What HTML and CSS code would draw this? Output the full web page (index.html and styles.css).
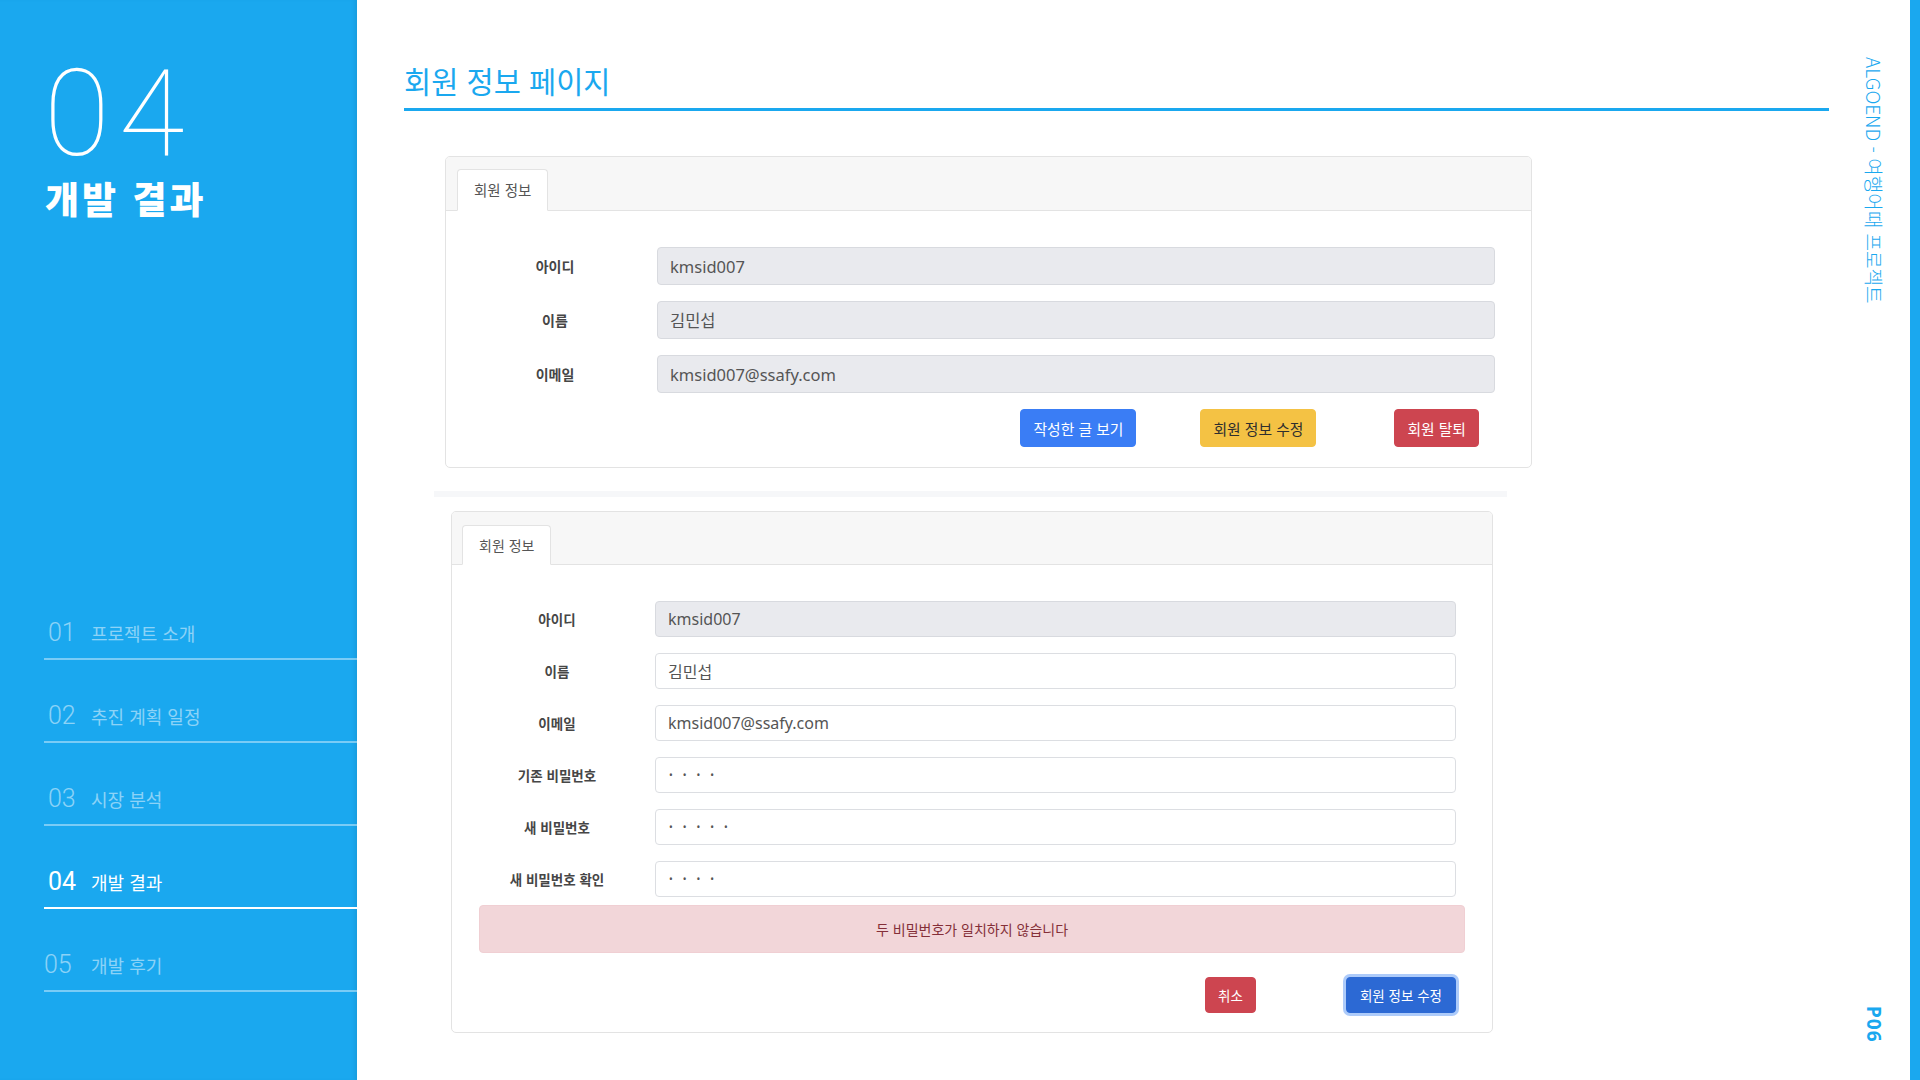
FILE: index.html
```html
<!DOCTYPE html>
<html lang="ko">
<head>
<meta charset="utf-8">
<title>개발 결과 - 회원 정보 페이지</title>
<link rel="stylesheet" href="styles.css">
</head>
<body>
<div class="slide">
  <aside class="sidebar">
    <div class="chapter-num">04</div>
    <div class="chapter-title">개발 결과</div>
    <nav class="toc">
      <div class="toc-item"><span class="toc-num">01</span><span class="toc-text">프로젝트 소개</span></div>
      <div class="toc-item"><span class="toc-num">02</span><span class="toc-text">추진 계획 일정</span></div>
      <div class="toc-item"><span class="toc-num">03</span><span class="toc-text">시장 분석</span></div>
      <div class="toc-item active"><span class="toc-num">04</span><span class="toc-text">개발 결과</span></div>
      <div class="toc-item"><span class="toc-num toc-num-shift">05</span><span class="toc-text">개발 후기</span></div>
    </nav>
  </aside>

  <main class="content">
    <h1 class="page-title">회원 정보 페이지</h1>

    <section class="card card-view">
      <div class="card-header"><div class="tab">회원 정보</div></div>
      <div class="card-body">
        <div class="form-grid">
          <label class="label">아이디</label><input class="input input-readonly" type="text" value="kmsid007" readonly>
          <label class="label">이름</label><input class="input input-readonly" type="text" value="김민섭" readonly>
          <label class="label">이메일</label><input class="input input-readonly" type="text" value="kmsid007@ssafy.com" readonly>
        </div>
        <div class="actions">
          <button class="btn btn-primary">작성한 글 보기</button>
          <button class="btn btn-warning">회원 정보 수정</button>
          <button class="btn btn-danger btn-far">회원 탈퇴</button>
        </div>
      </div>
    </section>

    <div class="divider"></div>

    <section class="card card-edit">
      <div class="card-header"><div class="tab">회원 정보</div></div>
      <div class="card-body">
        <div class="form-grid">
          <label class="label">아이디</label><input class="input input-readonly" type="text" value="kmsid007" readonly>
          <label class="label">이름</label><input class="input" type="text" value="김민섭">
          <label class="label">이메일</label><input class="input" type="text" value="kmsid007@ssafy.com">
          <label class="label">기존 비밀번호</label><input class="input pw" type="password" value="1234">
          <label class="label">새 비밀번호</label><input class="input pw" type="password" value="12345">
          <label class="label">새 비밀번호 확인</label><input class="input pw" type="password" value="1234">
        </div>
        <div class="alert">두 비밀번호가 일치하지 않습니다</div>
        <div class="actions">
          <button class="btn btn-danger">취소</button>
          <button class="btn btn-primary-dark">회원 정보 수정</button>
        </div>
      </div>
    </section>
  </main>

  <aside class="rail">
    <div class="rail-title">ALGOEND - 여행어때 프로젝트</div>
    <div class="rail-page">P06</div>
  </aside>
  <div class="edge"></div>
</div>
</body>
</html>
```

FILE: styles.css
```css
* { box-sizing: border-box; }
html, body { margin: 0; padding: 0; }
body {
  width: 1920px;
  height: 1080px;
  overflow: hidden;
  background: #ffffff;
  font-family: "Noto Sans", "Noto Sans CJK KR", sans-serif;
}
.slide { display: flex; width: 1920px; height: 1080px; }

/* ---------- sidebar ---------- */
.sidebar {
  width: 357px;
  flex: none;
  background: #1aa8ef;
  padding: 54px 0 0 44px;
  display: flex;
  flex-direction: column;
  color: #ffffff;
  box-shadow: inset -4px 0 4px -2px rgba(0, 0, 0, 0.08);
}
.chapter-num {
  font-family: Roboto, Lato, sans-serif;
  font-weight: 100;
  font-size: 120px;
  line-height: 120px;
  height: 120px;
  letter-spacing: 9px;
}
.chapter-title {
  margin-top: 6px;
  padding-left: 1px;
  font-family: "Noto Sans CJK KR", sans-serif;
  font-weight: 900;
  font-size: 37px;
  line-height: 36px;
  letter-spacing: 3px;
}
.toc { margin-top: 361px; }
.toc-item {
  display: flex;
  align-items: center;
  height: 83px;
  padding-top: 41px;
  padding-bottom: 10px;
  border-bottom: 2px solid rgba(255, 255, 255, 0.42);
  color: rgba(255, 255, 255, 0.5);
}
.toc-num {
  width: 47px;
  padding-left: 4px;
  font-family: Roboto, sans-serif;
  font-weight: 300;
  font-size: 25px;
  line-height: 30px;
}
.toc-num-shift { padding-left: 0; }
.toc-text {
  font-family: "Noto Sans CJK KR", sans-serif;
  font-weight: 400;
  font-size: 18px;
  line-height: 30px;
}
.toc-item.active { color: #ffffff; border-bottom-color: #ffffff; }
.toc-item.active .toc-num { font-weight: 400; }

/* ---------- content ---------- */
.content {
  flex: 1;
  padding: 62px 0 0 47px;
}
.page-title {
  margin: 0;
  font-family: "Noto Sans CJK KR", sans-serif;
  font-weight: 400;
  font-size: 29.5px;
  line-height: 36px;
  color: #1aa8ef;
  padding-bottom: 10px;
  border-bottom: 3px solid #1aa8ef;
}

.card {
  border: 1px solid #e3e3e3;
  border-radius: 5px;
  background: #ffffff;
  overflow: hidden;
}
.card-header {
  display: flex;
  background: #f7f7f7;
  border-bottom: 1px solid #e3e3e3;
}
.tab {
  background: #ffffff;
  border: 1px solid #e3e3e3;
  border-bottom-color: #ffffff;
  border-radius: 4px 4px 0 0;
  margin-bottom: -1px;
  padding: 0 16px;
  color: #555555;
  font-family: "Noto Sans CJK KR", sans-serif;
}
.label {
  text-align: center;
  font-family: "Noto Sans CJK KR", sans-serif;
  font-weight: 700;
  color: #464646;
  align-self: center;
}
.input {
  display: block;
  width: 100%;
  height: 100%;
  margin: 0;
  padding: 0 12px;
  border: 1px solid #dcdee2;
  border-radius: 4px;
  background: #ffffff;
  color: #555555;
  font-family: "Noto Sans", "Noto Sans CJK KR", sans-serif;
  outline: none;
}
.input-readonly { background: #e9eaee; border-color: #d8dadf; }
.input.pw { font-size: 10px; letter-spacing: 10px; padding-left: 13px; color: #555555; }

.form-grid { display: grid; grid-template-columns: 162px 1fr; column-gap: 21px; row-gap: 16px; }
.actions { display: flex; justify-content: flex-end; align-items: center; }

.btn {
  border: 1px solid transparent;
  border-radius: 4px;
  padding: 0 12px;
  font-family: "Noto Sans CJK KR", sans-serif;
  font-weight: 400;
  cursor: pointer;
  white-space: nowrap;
}
.btn-primary { background: #3a7df5; border-color: #3a7df5; color: #ffffff; }
.btn-warning { background: #f4c244; border-color: #f4c244; color: #2e2e2e; }
.btn-danger { background: #cd4550; border-color: #cd4550; color: #ffffff; }
.btn-primary-dark {
  background: #2c69d4;
  border-color: #2c69d4;
  color: #ffffff;
  padding: 0 13px;
  box-shadow: 0 0 0 3px rgba(74, 140, 245, 0.45);
}

/* view card */
.card-view { margin: 45px 0 0 41px; width: 1087px; }
.card-view .card-header { height: 54px; padding: 12px 0 0 11px; }
.card-view .tab { height: 42px; line-height: 40px; font-size: 14.5px; }
.card-view .card-body { padding: 36px 36px 20px 28px; }
.card-view .form-grid { grid-auto-rows: 38px; }
.card-view .label { font-size: 14px; }
.card-view .input { font-size: 16.5px; }
.card-view .actions { margin-top: 16px; padding-right: 16px; gap: 64px; }
.card-view .btn { height: 38px; font-size: 14.8px; }
.card-view .btn-far { margin-left: 14px; }

.divider {
  margin: 23px 0 0 30px;
  width: 1073px;
  height: 6px;
  background: #f6f7f9;
}

/* edit card */
.card-edit { margin: 14px 0 0 47px; width: 1042px; }
.card-edit .card-header { height: 53px; padding: 13px 0 0 10px; }
.card-edit .tab { height: 40px; line-height: 38px; font-size: 14px; }
.card-edit .card-body { padding: 36px 36px 19px 28px; }
.card-edit .form-grid { grid-template-columns: 154px 1fr; grid-auto-rows: 36px; }
.card-edit .label { font-size: 13.5px; }
.card-edit .input { font-size: 16px; }
.card-edit .input.pw { font-size: 10px; }
.alert {
  margin: 8px -9px 0 -1px;
  height: 48px;
  line-height: 46px;
  border: 1px solid #f0cfd3;
  border-radius: 4px;
  background: #f2d6d9;
  color: #842f38;
  text-align: center;
  font-family: "Noto Sans CJK KR", sans-serif;
  font-size: 14px;
}
.card-edit .actions { margin-top: 24px; gap: 90px; padding-right: 0; }
.card-edit .btn { height: 36px; font-size: 13.5px; }

/* ---------- right rail ---------- */
.rail {
  width: 81px;
  flex: none;
  display: flex;
  flex-direction: column;
  justify-content: space-between;
  align-items: center;
  padding: 57px 0 37px 8px;
}
.rail-title {
  writing-mode: vertical-rl;
  text-orientation: sideways;
  font-family: "Noto Sans CJK KR", sans-serif;
  font-weight: 300;
  font-size: 19px;
  line-height: 24px;
  letter-spacing: 0;
  color: #1aa8ef;
}
.rail-page {
  writing-mode: vertical-rl;
  text-orientation: sideways;
  font-family: "Noto Sans", sans-serif;
  font-weight: 700;
  font-size: 19px;
  line-height: 24px;
  letter-spacing: 1px;
  color: #1aa8ef;
}
.edge { width: 10px; flex: none; background: #1aa8ef; }
```
